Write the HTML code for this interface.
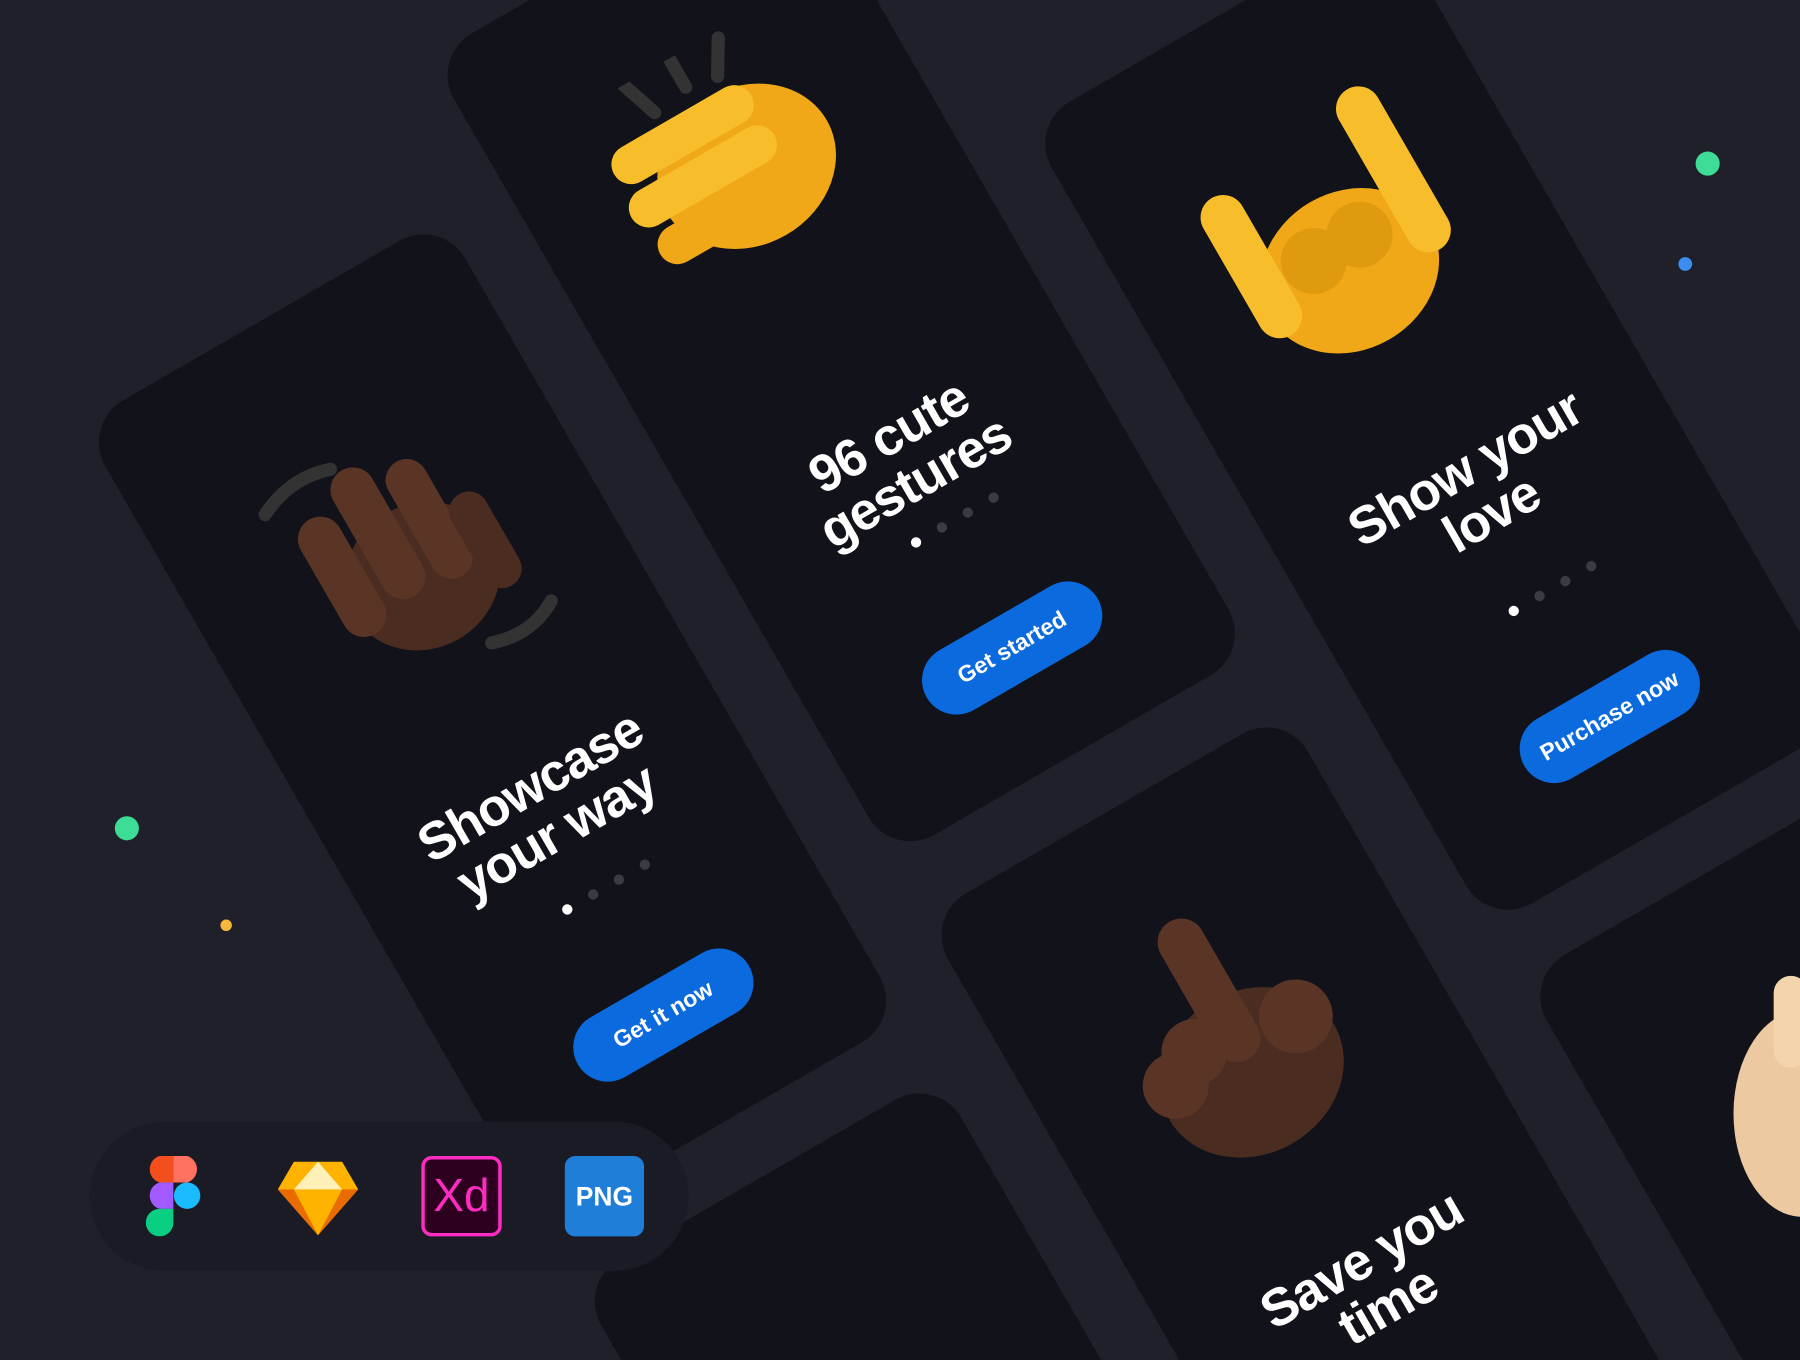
<!DOCTYPE html>
<html><head><meta charset="utf-8"><style>
html,body{margin:0;padding:0;width:1800px;height:1360px;overflow:hidden;background:#1f2029;font-family:"Liberation Sans",sans-serif}
#clip{position:relative;width:1800px;height:1360px;overflow:hidden}
#w{position:absolute;left:0;top:0;width:1568px;height:1185px;transform:scale(1.148);transform-origin:0 0;overflow:hidden}
#rot{position:absolute;left:-10px;top:10px;transform:rotate(-30deg);transform-origin:0 0}
.card{position:absolute;width:362px;height:806px;background:#12121b;border-radius:42px;overflow:visible}
.t{position:absolute;left:0;width:362px;text-align:center;color:#fff;font-weight:bold;font-size:46px;line-height:46px;letter-spacing:-1px}
.dots{position:absolute;left:151px;width:70px;height:8px}
.dots i{position:absolute;top:0;width:9px;height:9px;border-radius:50%;background:#3a3b45}
.dots i:first-child{background:#fff}
.btn{position:absolute;left:96px;width:172px;height:60px;border-radius:30px;background:#0b6bde;color:#fff;font-weight:bold;font-size:20px;line-height:60px;text-align:center}
.hand{position:absolute;left:65px;width:230px;height:230px}
.dot{position:absolute;border-radius:50%}
</style></head><body><div id="clip"><div id="w">
<div id="rot">
 <div class="card" style="left:-110px;top:352px">
  <svg class="hand" style="top:125px" viewBox="0 0 200 200"><ellipse cx="110" cy="120" rx="60" ry="55" fill="#4a2c20"/><rect x="40" y="40" width="34" height="100" rx="17" fill="#5a3526"/><rect x="80" y="20" width="34" height="110" rx="17" fill="#5a3526"/><rect x="120" y="35" width="32" height="100" rx="16" fill="#5a3526"/><rect x="150" y="80" width="30" height="80" rx="15" fill="#4a2c20"/><path d="M30 20 Q60 5 90 15" stroke="#333" stroke-width="10" fill="none" stroke-linecap="round"/><path d="M130 190 Q160 200 185 185" stroke="#333" stroke-width="10" fill="none" stroke-linecap="round"/></svg>
  <div class="t" style="top:445px">Showcase<br>your way</div>
  <div class="dots" style="top:573px"><i style="left:0"></i><i style="left:26px"></i><i style="left:52px"></i><i style="left:78px"></i></div>
  <div class="btn" style="top:669px">Get it now</div>
 </div>
 <div class="card" style="left:313px;top:227px">
  <svg class="hand" style="top:105px" viewBox="0 0 200 200"><ellipse cx="110" cy="100" rx="70" ry="60" fill="#f0a818"/><rect x="20" y="40" width="120" height="30" rx="15" fill="#f7bd2a"/><rect x="15" y="75" width="125" height="30" rx="15" fill="#f7bd2a"/><rect x="20" y="110" width="120" height="30" rx="15" fill="#f0a818"/><path d="M60 0 L70 30 M100 -5 L100 25 M140 5 L125 30" stroke="#333" stroke-width="10" stroke-linecap="round"/></svg>
  <div class="t" style="top:462px">96 cute<br>gestures</div>
  <div class="dots" style="top:573px"><i style="left:0"></i><i style="left:26px"></i><i style="left:52px"></i><i style="left:78px"></i></div>
  <div class="btn" style="top:669px">Get started</div>
 </div>
 <div class="card" style="left:734px;top:539px">
  <svg class="hand" style="top:100px" viewBox="0 0 200 200"><ellipse cx="100" cy="130" rx="70" ry="60" fill="#f0a818"/><rect x="20" y="30" width="34" height="120" rx="17" fill="#f7bd2a"/><rect x="150" y="10" width="34" height="140" rx="17" fill="#f7bd2a"/><circle cx="80" cy="110" r="25" fill="#e09a10"/><circle cx="120" cy="110" r="25" fill="#e09a10"/></svg>
  <div class="t" style="top:425px">Show your<br>love</div>
  <div class="dots" style="top:573px"><i style="left:0"></i><i style="left:26px"></i><i style="left:52px"></i><i style="left:78px"></i></div>
  <div class="btn" style="top:669px">Purchase now</div>
 </div>
 <div class="card" style="left:311px;top:1091px">
  <svg class="hand" style="top:110px" viewBox="0 0 200 200"><ellipse cx="100" cy="130" rx="72" ry="62" fill="#4a2c20"/><rect x="85" y="0" width="36" height="120" rx="18" fill="#5a3526"/><circle cx="45" cy="110" r="25" fill="#5a3526"/><circle cx="70" cy="95" r="25" fill="#5a3526"/><circle cx="150" cy="110" r="28" fill="#5a3526"/></svg>
  <div class="t" style="top:425px">Save you<br>time</div>
 </div>
 <div class="card" style="left:-110px;top:1216px"></div>
 <div class="card" style="left:736px;top:1398px"></div>
</div>
<svg style="position:absolute;left:1500px;top:850px" width="80" height="210"><ellipse cx="70" cy="120" rx="60" ry="90" fill="#ecc9a0"/><rect x="45" y="0" width="30" height="80" rx="15" fill="#f3d4ad"/></svg>
<div class="dot" style="left:100px;top:711px;width:21px;height:21px;background:#3ddc97"></div>
<div class="dot" style="left:192px;top:801px;width:10px;height:10px;background:#f5b83d"></div>
<div class="dot" style="left:1477px;top:132px;width:21px;height:21px;background:#3ddc97"></div>
<div class="dot" style="left:1462px;top:224px;width:12px;height:12px;background:#3b8ef0"></div>
<div style="position:absolute;left:78px;top:977px;width:522px;height:130px;border-radius:65px;background:#1b1b26"></div>
<svg style="position:absolute;left:127px;top:1007px" width="48" height="70" viewBox="0 0 48 70"><path d="M24 0H12a12 12 0 0 0 0 23h12z" fill="#f24e1e"/><path d="M24 0h12a12 12 0 0 1 0 23H24z" fill="#ff7262"/><path d="M24 23H12a12 12 0 0 0 0 23h12z" fill="#a259ff"/><circle cx="36" cy="34.5" r="11.5" fill="#1abcfe"/><path d="M24 46H12a12 12 0 1 0 12 12z" fill="#0acf83"/></svg>
<svg style="position:absolute;left:242px;top:1010px" width="70" height="66" viewBox="0 0 70 66"><polygon points="14,2 56,2 70,26 35,66 0,26" fill="#fdb300"/><polygon points="35,2 56,26 14,26" fill="#fff0b8"/><polygon points="0,26 14,26 35,66" fill="#ea6c00"/><polygon points="70,26 56,26 35,66" fill="#ea6c00"/></svg>
<div style="position:absolute;left:367px;top:1007px;width:64px;height:64px;border:3px solid #ff2bc2;border-radius:9px;background:#2e001f;color:#ff2bc2;font-size:40px;line-height:64px;text-align:center">Xd</div>
<div style="position:absolute;left:492px;top:1007px;width:69px;height:70px;border-radius:9px;background:#1f7fd8;color:#fff;font-weight:bold;font-size:23px;line-height:70px;text-align:center">PNG</div>
</div></div></body></html>
